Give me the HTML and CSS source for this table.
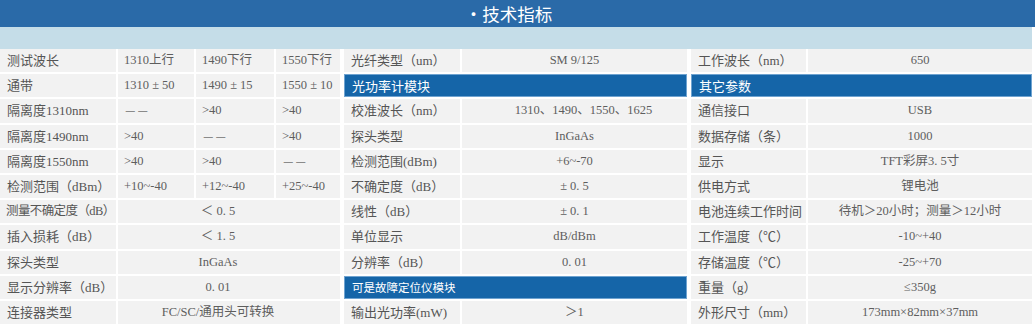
FILE: index.html
```html
<!DOCTYPE html>
<html lang="zh">
<head>
<meta charset="utf-8">
<link rel="stylesheet" href="styles.css">
</head>
<body>
<div class="title">·技术指标</div>
<div class="subbar"></div>
<div class="panels">
  <div class="panel left">
    <div class="row"><div class="lab">测试波长</div><div class="val">1310上行</div><div class="val">1490下行</div><div class="val">1550下行</div></div>
    <div class="row"><div class="lab">通带</div><div class="val">1310 ± 50</div><div class="val">1490 ± 15</div><div class="val">1550 ± 10</div></div>
    <div class="row"><div class="lab">隔离度1310nm</div><div class="val"><span class="dash">－－</span></div><div class="val">&gt;40</div><div class="val">&gt;40</div></div>
    <div class="row"><div class="lab">隔离度1490nm</div><div class="val">&gt;40</div><div class="val"><span class="dash">－－</span></div><div class="val">&gt;40</div></div>
    <div class="row"><div class="lab">隔离度1550nm</div><div class="val">&gt;40</div><div class="val">&gt;40</div><div class="val"><span class="dash">－－</span></div></div>
    <div class="row"><div class="lab">检测范围（dBm）</div><div class="val">+10~-40</div><div class="val">+12~-40</div><div class="val">+25~-40</div></div>
    <div class="row"><div class="lab tight">测量不确定度（dB）</div><div class="val span">＜ 0. 5</div></div>
    <div class="row"><div class="lab">插入损耗（dB）</div><div class="val span">＜ 1. 5</div></div>
    <div class="row"><div class="lab">探头类型</div><div class="val span">InGaAs</div></div>
    <div class="row"><div class="lab">显示分辨率（dB）</div><div class="val span">0. 01</div></div>
    <div class="row"><div class="lab">连接器类型</div><div class="val span">FC/SC/通用头可转换</div></div>
  </div>
  <div class="panel mid">
    <div class="row"><div class="lab">光纤类型（um）</div><div class="val">SM 9/125</div></div>
    <div class="sect">光功率计模块</div>
    <div class="row"><div class="lab">校准波长（nm）</div><div class="val shift">1310、1490、1550、1625</div></div>
    <div class="row"><div class="lab">探头类型</div><div class="val">InGaAs</div></div>
    <div class="row"><div class="lab">检测范围(dBm)</div><div class="val">+6~-70</div></div>
    <div class="row"><div class="lab">不确定度（dB）</div><div class="val">± 0. 5</div></div>
    <div class="row"><div class="lab">线性（dB）</div><div class="val">± 0. 1</div></div>
    <div class="row"><div class="lab">单位显示</div><div class="val">dB/dBm</div></div>
    <div class="row"><div class="lab">分辨率（dB）</div><div class="val">0. 01</div></div>
    <div class="sect small">可是故障定位仪模块</div>
    <div class="row"><div class="lab">输出光功率(mW)</div><div class="val">＞1</div></div>
  </div>
  <div class="panel right">
    <div class="row"><div class="lab">工作波长（nm）</div><div class="val">650</div></div>
    <div class="sect">其它参数</div>
    <div class="row"><div class="lab">通信接口</div><div class="val">USB</div></div>
    <div class="row"><div class="lab">数据存储（条）</div><div class="val">1000</div></div>
    <div class="row"><div class="lab">显示</div><div class="val">TFT彩屏3. 5寸</div></div>
    <div class="row"><div class="lab">供电方式</div><div class="val">锂电池</div></div>
    <div class="row"><div class="lab">电池连续工作时间</div><div class="val">待机＞20小时；测量＞12小时</div></div>
    <div class="row"><div class="lab">工作温度（℃）</div><div class="val">-10~+40</div></div>
    <div class="row"><div class="lab">存储温度（℃）</div><div class="val">-25~+70</div></div>
    <div class="row"><div class="lab">重量（g）</div><div class="val">≤350g</div></div>
    <div class="row"><div class="lab">外形尺寸（mm）</div><div class="val">173mm×82mm×37mm</div></div>
  </div>
</div>
</body>
</html>
```
FILE: styles.css
```css
html, body {
  margin: 0;
  padding: 0;
  background: #ffffff;
}
body {
  width: 1035px;
  font-family: "Liberation Serif", "Noto Sans CJK SC", serif;
}
.title {
  height: 27px;
  background: #2a6aa8;
  color: #ffffff;
  font-family: "Noto Sans CJK SC", sans-serif;
  font-size: 17.5px;
  font-weight: 400;
  line-height: 27px;
  text-align: center;
  padding-right: 18px;
}
.subbar {
  width: 1032px;
  height: 22px;
  background: #c5dde8;
}
.panels {
  display: flex;
  gap: 4px;
  width: 1032px;
}
.panel {
  display: flex;
  flex-direction: column;
  gap: 2px;
}
.left { width: 340px; }
.mid { width: 343px; }
.right { width: 341px; }
.row {
  display: grid;
  gap: 2px;
  height: 23.2px;
}
.left .row { grid-template-columns: 116px 76px 78px 64px; }
.mid .row { grid-template-columns: 116px 1fr; }
.right .row { grid-template-columns: 115px 1fr; }
.lab, .val {
  background: #f2f2f2;
  line-height: 23px;
  font-size: 13px;
  white-space: nowrap;
  overflow: hidden;
}
.lab {
  color: #555555;
  padding-left: 7px;
}
.lab.tight {
  font-size: 12.5px;
  letter-spacing: -0.6px;
  padding-left: 6px;
}
.val {
  color: #5e5e5e;
  font-size: 12.5px;
  text-align: center;
}
.val.shift {
  padding-left: 18px;
}
.dash {
  font-family: "Noto Sans CJK SC", sans-serif;
  color: #8a8a8a;
}
.left .val {
  text-align: left;
  padding-left: 6px;
}
.left .val.span {
  grid-column: span 3;
  text-align: center;
  padding-left: 0;
  padding-right: 22px;
}
.sect {
  height: 21.2px;
  line-height: 21px;
  background: #1565a8;
  border: 1px solid #6fa3d0;
  color: #ffffff;
  font-family: "Noto Sans CJK SC", sans-serif;
  font-size: 13px;
  padding-left: 7px;
}
.sect.small {
  font-size: 11.5px;
}
```
